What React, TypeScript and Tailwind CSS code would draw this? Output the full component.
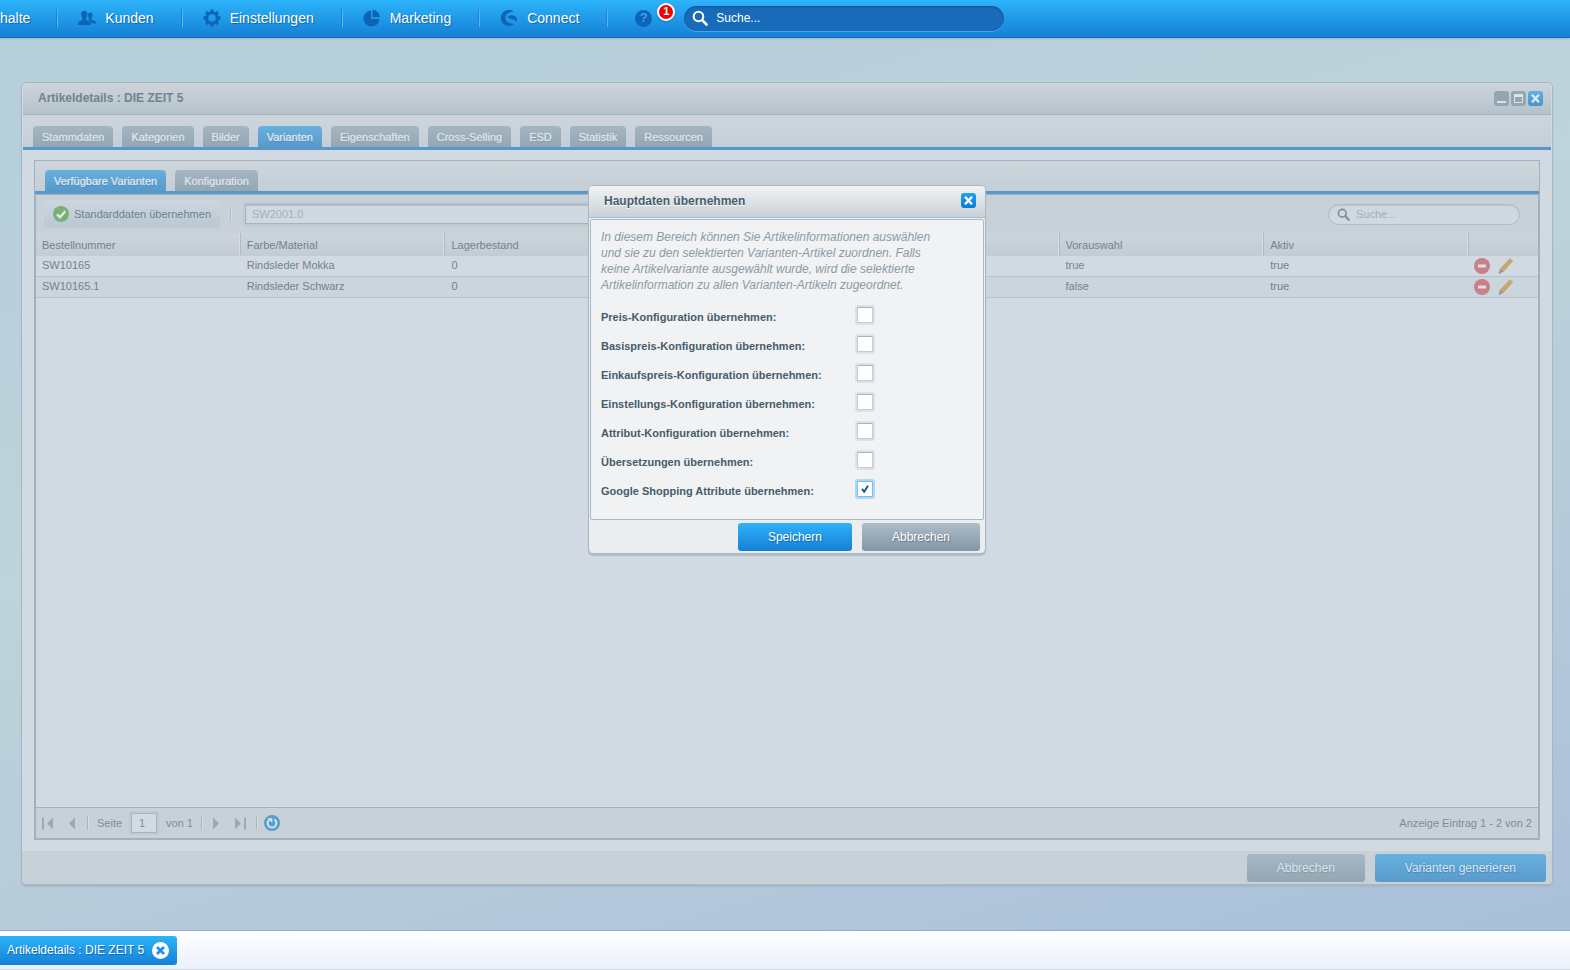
import type { ReactNode } from "react";

const CONFIG_OPTIONS = [
  { id: "price", label: "Preis-Konfiguration übernehmen:", checked: false },
  { id: "basePrice", label: "Basispreis-Konfiguration übernehmen:", checked: false },
  { id: "purchasePrice", label: "Einkaufspreis-Konfiguration übernehmen:", checked: false },
  { id: "settings", label: "Einstellungs-Konfiguration übernehmen:", checked: false },
  { id: "attribute", label: "Attribut-Konfiguration übernehmen:", checked: false },
  { id: "translations", label: "Übersetzungen übernehmen:", checked: false },
  { id: "google", label: "Google Shopping Attribute übernehmen:", checked: true },
];

const VARIANTS = [
  { number: "SW10165", color: "Rindsleder Mokka", stock: "0", preselected: "true", active: "true" },
  { number: "SW10165.1", color: "Rindsleder Schwarz", stock: "0", preselected: "false", active: "true" },
];

const ARTICLE_TABS = [
  "Stammdaten",
  "Kategorien",
  "Bilder",
  "Varianten",
  "Eigenschaften",
  "Cross-Selling",
  "ESD",
  "Statistik",
  "Ressourcen",
];

function UsersIcon() {
  return (
    <svg width="18" height="16" viewBox="0 0 18 16" fill="#0d65b5" aria-hidden="true">
      <path d="M12.300 2.500c1.400 0 2.300 1 2.300 2.600 0 1.200-.4 2-1 2.600v1.600c.3.900 4.400 1.200 4.400 3.200v1h-4.300c-.4-1.600-1.900-2.300-3.100-2.800.3-1 .3-2.600.2-3-.5-.6-.8-1.300-.8-2.700 0-1.500.9-2.500 2.300-2.500z" />
      <path d="M6.300.8c2 0 3.200 1.400 3.200 3.500 0 1.500-.5 2.700-1.200 3.500v1.800c.4 1.200 4.600 1.700 4.600 4.300v1H0v-1c0-2.600 4-3.100 4.400-4.300V7.800C3.600 7 3.100 5.800 3.100 4.300 3.100 2.200 4.300.8 6.300.8z" />
    </svg>
  );
}

function GearIcon() {
  const teeth = [0, 45, 90, 135, 180, 225, 270, 315];
  return (
    <svg width="18" height="18" viewBox="0 0 18 18" aria-hidden="true">
      <circle cx="9" cy="9" r="5.200" fill="none" stroke="#0d65b5" strokeWidth="2.800" />
      {teeth.map((a) => (
        <path key={a} d="M7 3.200 7.600.5h2.800L11 3.200z" fill="#0d65b5" transform={`rotate(${a} 9 9)`} />
      ))}
    </svg>
  );
}

function PieIcon() {
  return (
    <svg width="18" height="18" viewBox="0 0 18 18" fill="#0d65b5" aria-hidden="true">
      <path d="M8 1.500V10h8.500A8 8 0 1 1 8 1.500z" />
      <path d="M9.500.8a7.500 7.500 0 0 1 7.300 7.500H9.500z" />
    </svg>
  );
}

function ConnectIcon() {
  return (
    <svg width="18" height="18" viewBox="0 0 18 18" fill="#0d65b5" aria-hidden="true">
      <path d="M14.500 2.500C12.500.9 9.500.5 6.800 1.300 3.200 2.400.8 5.400.8 9c0 4.500 3.500 7.900 8 7.900 2 0 3.900-.7 5.300-2-3.900.4-8.500-1.600-8.700-5.700C5.200 5 9.300 2.300 14.500 2.500z" />
      <path d="M8.700 6.900c2.500-1.500 8 .3 8.300 3.300 0 .9-.3 1.900-.7 2.600-1-2.500-6.800-2.300-8.100-4.200-.4-.6-.1-1.300.5-1.700z" />
    </svg>
  );
}

function SearchIcon({ size, color }: { size: number; color: string }) {
  return (
    <svg width={size} height={size} viewBox="0 0 16 16" fill="none" stroke={color} className="shrink-0" aria-hidden="true">
      <circle cx="6.500" cy="6.500" r="4.800" strokeWidth="2" />
      <path d="M10.200 10.200 14.500 14.500" strokeWidth="2.600" strokeLinecap="round" />
    </svg>
  );
}

function NavItem({ icon, label }: { icon: ReactNode; label: string }) {
  return (
    <a href="#" className="flex h-[18px] items-center gap-[9px] border-l border-[#5cb8f5] pr-[28px] pl-[20px] whitespace-nowrap shadow-[-1px_0_0_#1b80cf]">
      {icon}
      {label}
    </a>
  );
}

function Tab({ label, active }: { label: string; active: boolean }) {
  return (
    <button
      type="button"
      role="tab"
      aria-selected={active}
      className={
        "h-[21px] rounded-t-[4px] px-[9px] text-[11px] leading-[22px] text-[#dce4ea] whitespace-nowrap " +
        (active
          ? "bg-linear-to-b from-[#65b1de] to-[#5899ca] [text-shadow:0_0_1px_#dce4ea,0_1px_1px_#3f7fc0]"
          : "bg-linear-to-b from-[#a5b6c1] to-[#93a6b3] [text-shadow:0_0_1px_#d5dde3,0_1px_1px_#8599a6]")
      }
    >
      {label}
    </button>
  );
}

function TabBar({ labels, active, nested }: { labels: string[]; active: string; nested?: boolean }) {
  return (
    <div
      role="tablist"
      className={
        "flex items-end gap-[9px] border-b-[3px] border-[#5698ca] bg-linear-to-b from-[#ced6dc] to-[#c5cdd7] px-[10px] " +
        (nested ? "pt-[9px]" : "pt-[11px]")
      }
    >
      {labels.map((label) => (
        <Tab key={label} label={label} active={label === active} />
      ))}
    </div>
  );
}

function CloseGlyph() {
  return (
    <svg width="9" height="9" viewBox="0 0 9 9" stroke="currentColor" strokeWidth="2.400" aria-hidden="true">
      <path d="M1 .8 8 8.200M8 .8 1 8.200" />
    </svg>
  );
}

function DeleteIcon() {
  return (
    <svg width="16" height="16" viewBox="0 0 16 16" aria-hidden="true">
      <circle cx="8" cy="8" r="8" fill="#ca8089" />
      <rect x="4" y="6.500" width="8" height="3" rx=".6" fill="#dde0e6" />
    </svg>
  );
}

function PencilIcon() {
  return (
    <svg width="16" height="16" viewBox="0 0 16 16" aria-hidden="true">
      <path d="M11.800.3 15.200 3 6 13.300 1.900 10.800z" fill="#c9a670" />
      <path d="M1.900 10.800 6 13.300 1.200 16 .8 15.600z" fill="#a3938f" />
    </svg>
  );
}

function PagerArrow({ label, flip, bar }: { label: string; flip?: boolean; bar?: boolean }) {
  return (
    <button type="button" aria-label={label} className="flex h-4 w-3 items-center justify-center">
      <svg width="12" height="13" viewBox="0 0 12 13" fill="#9aabb7" className={flip ? "rotate-180" : ""} aria-hidden="true">
        {bar && <rect x="0" y=".5" width="2" height="12" />}
        <path d="M11 .5v12L5 6.500z" />
      </svg>
    </button>
  );
}

function PagerDivider() {
  return <div className="h-[14px] w-[2px] border-l border-[#a9b7c1] bg-[#d6dee4]" />;
}

function MainNav() {
  return (
    <header className="flex h-[38px] items-center border-b border-[#0f69b9] bg-linear-to-b from-[#2db4fa] to-[#1580d5] pb-px text-[14px] text-white shadow-[0_1px_2px_#9fb6c2] [text-shadow:1px_1px_1px_#1463aa]">
      <a href="#" className="pr-[27px]">halte</a>
      <NavItem icon={<UsersIcon />} label="Kunden" />
      <NavItem icon={<GearIcon />} label="Einstellungen" />
      <NavItem icon={<PieIcon />} label="Marketing" />
      <NavItem icon={<ConnectIcon />} label="Connect" />
      <div className="flex h-[18px] items-center border-l border-[#5cb8f5] pl-[27px] shadow-[-1px_0_0_#1b80cf]">
        <button type="button" aria-label="Hilfe" className="relative flex size-[17px] items-center justify-center rounded-full bg-[#0d65b5] text-[13px] font-bold text-[#3ba3ec] [text-shadow:none]">
          ?
          <span className="absolute -top-[7px] left-[22px] flex size-[18px] items-center justify-center rounded-full border-2 border-white bg-[#f80000] text-[11px] text-white shadow">
            1
          </span>
        </button>
      </div>
      <label className="ml-[32px] flex h-[25px] w-[320px] items-center gap-[8px] rounded-full bg-[#186bb8] pl-[8px] shadow-[inset_0_1px_2px_#0e559b,0_1px_0_#43a6ee]">
        <SearchIcon size={16} color="#ffffff" />
        <input
          aria-label="Suche"
          placeholder="Suche..."
          className="min-w-0 flex-1 bg-transparent text-[12px] text-white outline-none [text-shadow:none] placeholder:text-white"
        />
      </label>
    </header>
  );
}

function WindowControls() {
  return (
    <div className="flex gap-[2px]">
      <button type="button" aria-label="Minimieren" className="flex size-[15px] items-end justify-center rounded-[3px] bg-[#93a6b3] pb-[3px]">
        <span className="h-[2px] w-[9px] bg-[#dbe2e8]" />
      </button>
      <button type="button" aria-label="Maximieren" className="flex size-[15px] items-center justify-center rounded-[3px] bg-[#93a6b3]">
        <span className="h-[9px] w-[9px] border border-t-[3px] border-[#dbe2e8]" />
      </button>
      <button type="button" aria-label="Schließen" className="flex size-[15px] items-center justify-center rounded-[3px] bg-linear-to-b from-[#5fb0e0] to-[#4b95cd] text-[#dfe7ee]">
        <CloseGlyph />
      </button>
    </div>
  );
}

function VariantTable() {
  const head = "h-[23px] border-r border-[#adbcc6] px-[6px] text-left font-normal shadow-[inset_-1px_0_0_#d6dee3]";
  const cell = "h-[21px] border-b border-[#b4c2cc] px-[6px] pb-[2px]";
  return (
    <table className="w-full table-fixed border-separate border-spacing-0 text-[11px] leading-[16px] text-[#71838f]">
      <thead className="bg-linear-to-b from-[#ccd5db] to-[#c3cbd5]">
        <tr>
          <th className={head}>Bestellnummer</th>
          <th className={head}>Farbe/Material</th>
          <th className={head}>Lagerbestand</th>
          <th className={head} />
          <th className={head} />
          <th className={head}>Vorauswahl</th>
          <th className={head}>Aktiv</th>
          <th className="w-[69px]" />
        </tr>
      </thead>
      <tbody>
        {VARIANTS.map((v) => (
          <tr key={v.number} className="even:bg-[#cbd5dc]">
            <td className={cell}>{v.number}</td>
            <td className={cell}>{v.color}</td>
            <td className={cell}>{v.stock}</td>
            <td className={cell} />
            <td className={cell} />
            <td className={cell}>{v.preselected}</td>
            <td className={cell}>{v.active}</td>
            <td className="border-b border-[#b4c2cc] pl-[5px]">
              <div className="flex gap-[8px]">
                <button type="button" aria-label="Löschen"><DeleteIcon /></button>
                <button type="button" aria-label="Bearbeiten"><PencilIcon /></button>
              </div>
            </td>
          </tr>
        ))}
      </tbody>
    </table>
  );
}

function VariantToolbar() {
  return (
    <div className="flex h-[38px] items-center bg-[#c8d1d8] pr-[18px] pl-[8px]">
      <button type="button" className="flex h-[28px] items-center gap-[5px] rounded-[4px] bg-linear-to-b from-[#cdd6de] to-[#b9c8d4] px-[9px] text-[11px] whitespace-nowrap text-[#6f818c]">
        <svg width="16" height="16" viewBox="0 0 16 16" aria-hidden="true">
          <circle cx="8" cy="8" r="8" fill="#79b075" />
          <path d="M4 8.300 7 11.200 12.300 5.200" fill="none" stroke="#e3e9ea" strokeWidth="2.400" />
        </svg>
        Standarddaten übernehmen
      </button>
      <div className="ml-[10px] h-[14px] w-[2px] border-l border-[#a3bfdc] bg-[#d3dde6]" />
      <input
        aria-label="Artikelnummer"
        placeholder="SW2001.0"
        className="ml-[13px] h-[20px] w-[480px] border border-[#a5b4be] bg-[#d0d9df] px-[6px] text-[11px] text-[#71838f] shadow-[0_0_0_2px_#bfcad2,inset_0_1px_1px_#b5c2cb] outline-none placeholder:text-[#a0b0ba]"
      />
      <label className="ml-auto flex h-[21px] w-[192px] items-center gap-[6px] rounded-full border border-[#adbcc6] bg-[#d0d9e0] pl-[8px] shadow-[inset_0_1px_1px_#b8c5ce]">
        <SearchIcon size={13} color="#7b8e9a" />
        <input
          aria-label="Varianten durchsuchen"
          placeholder="Suche..."
          className="min-w-0 flex-1 bg-transparent text-[11px] text-[#71838f] outline-none placeholder:text-[#9cadb8]"
        />
      </label>
    </div>
  );
}

function Pager() {
  return (
    <div className="flex h-[31px] items-center border-t border-[#9fb1be] bg-[#c8d1d8] px-[6px] text-[11px] whitespace-nowrap text-[#7b8d98]">
      <PagerArrow label="Erste Seite" bar />
      <div className="ml-[10px]"><PagerArrow label="Vorherige Seite" /></div>
      <div className="mr-[8px] ml-[11px]"><PagerDivider /></div>
      <label htmlFor="page">Seite</label>
      <input id="page" defaultValue="1" className="mr-[9px] ml-[9px] h-[20px] w-[26px] border border-[#a5b4be] bg-[#d2dbe2] px-[7px] text-[11px] shadow-[0_0_0_2px_#bfcad2] outline-none" />
      <span>von 1</span>
      <div className="mr-[9px] ml-[8px]"><PagerDivider /></div>
      <PagerArrow label="Nächste Seite" flip />
      <div className="ml-[10px]"><PagerArrow label="Letzte Seite" flip bar /></div>
      <div className="mr-[6px] ml-[10px]"><PagerDivider /></div>
      <button type="button" aria-label="Aktualisieren">
        <svg width="16" height="16" viewBox="0 0 16 16" aria-hidden="true">
          <circle cx="8" cy="8" r="8" fill="#559fca" />
          <path d="M10.300 4.300A4.400 4.400 0 1 1 5.200 4.700" fill="none" stroke="#d5e3ec" strokeWidth="2" />
          <path d="M3.500 3.300h4.800V8z" fill="#d5e3ec" />
        </svg>
      </button>
      <span className="ml-auto">Anzeige Eintrag 1 - 2 von 2</span>
    </div>
  );
}

function ApplyDataDialog() {
  return (
    <form
      role="dialog"
      aria-labelledby="dialog-title"
      className="absolute top-[102px] left-1/2 w-[398px] -translate-x-1/2 rounded-[5px] border border-[#a8b8c3] bg-[#ebedef] shadow-[0_2px_1px_#b0bec9]"
    >
      <div className="flex h-[32px] items-center justify-between rounded-t-[4px] border-b border-[#a9bac7] bg-linear-to-b from-[#f3f3f3] to-[#c8d2d8] pr-[9px] pb-[2px] pl-[15px]">
        <h2 id="dialog-title" className="text-[12px] font-bold text-[#475c6a] [text-shadow:0_1px_0_#ffffff]">Hauptdaten übernehmen</h2>
        <button type="button" aria-label="Schließen" className="flex size-[15px] items-center justify-center rounded-[3px] bg-linear-to-b from-[#1ba3f5] to-[#0a7bd3] text-white">
          <CloseGlyph />
        </button>
      </div>
      <div className="mx-px mt-px rounded-[2px] border border-[#a9b9c5] bg-[#f0f2f4] px-[10px] pt-[9px] pb-[11px]">
        <p className="mb-[12px] max-w-[350px] text-[12px] leading-[16px] text-[#8a9ba5] italic">
          In diesem Bereich können Sie Artikelinformationen auswählen und sie zu den selektierten Varianten-Artikel zuordnen. Falls keine Artikelvariante ausgewählt wurde, wird die selektierte Artikelinformation zu allen Varianten-Artikeln zugeordnet.
        </p>
        {CONFIG_OPTIONS.map((o) => (
          <div key={o.id} className="flex h-[29px] items-start">
            <label htmlFor={o.id} className="w-[254px] text-[11px] leading-[24px] font-bold whitespace-nowrap text-[#475c6a]">
              {o.label}
            </label>
            <div className="grid size-[20px] place-items-center">
              <input
                id={o.id}
                type="checkbox"
                defaultChecked={o.checked}
                className="peer col-start-1 row-start-1 size-[16px] appearance-none rounded-[1px] border border-[#c3cad0] border-t-[#a9b3ba] bg-white shadow-[0_0_0_2px_#dfe2e5] checked:border-[#7cbdf0] checked:shadow-[0_0_0_2px_#aadaf9]"
              />
              <svg width="8" height="8" viewBox="0 0 8 8" className="pointer-events-none invisible col-start-1 row-start-1 peer-checked:visible" aria-hidden="true">
                <path d="M1 3.800 3.200 6.700 7 .8" fill="none" stroke="#0f5c9f" strokeWidth="2" />
              </svg>
            </div>
          </div>
        ))}
      </div>
      <div className="flex justify-end gap-[10px] px-[5px] pt-[3px] pb-[2px] text-[12px] text-white">
        <button type="submit" className="h-[28px] rounded-[3px] bg-linear-to-b from-[#2fb1f8] to-[#1580d7] px-[30px] [text-shadow:1px_1px_1px_#1463aa]">
          Speichern
        </button>
        <button type="button" className="h-[28px] rounded-[3px] bg-linear-to-b from-[#aebcc7] to-[#8297a5] px-[30px] [text-shadow:1px_1px_1px_#5f7481]">
          Abbrechen
        </button>
      </div>
    </form>
  );
}

function ArticleWindow() {
  return (
    <section className="relative flex flex-1 flex-col rounded-[5px] border border-[#a5b7c3] bg-[#d1dae2] shadow-[0_2px_1px_#a6b8c8]">
      <div className="mx-px flex h-[32px] items-center justify-between rounded-t-[4px] border-b border-[#a2b4c1] bg-linear-to-b from-[#ced5db] to-[#b4c2cb] pr-[8px] pb-px pl-[15px]">
        <h1 className="text-[12px] font-bold text-[#71838f]">Artikeldetails : DIE ZEIT 5</h1>
        <WindowControls />
      </div>
      <div className="mx-px flex flex-1 flex-col">
        <TabBar labels={ARTICLE_TABS} active="Varianten" />
        <div className="mx-[11px] mt-[10px] mb-[11px] flex flex-1 flex-col border border-[#a0b2be]">
          <TabBar labels={["Verfügbare Varianten", "Konfiguration"]} active="Verfügbare Varianten" nested />
          <div className="flex flex-1 flex-col border border-[#a0b2be]">
            <VariantToolbar />
            <VariantTable />
            <div className="flex-1" />
            <Pager />
          </div>
        </div>
      </div>
      <div className="flex justify-end gap-[10px] rounded-b-[4px] bg-[#c8d1d7] px-[6px] pt-[3px] pb-[2px] text-[12px] text-[#dce5ec]">
        <button type="button" className="h-[28px] rounded-[3px] bg-linear-to-b from-[#a8b8c3] to-[#93a6b4] px-[30px] [text-shadow:0_1px_1px_#8093a1]">
          Abbrechen
        </button>
        <button type="button" className="h-[28px] rounded-[3px] bg-linear-to-b from-[#65b1de] to-[#5a9acb] px-[30px] [text-shadow:0_1px_1px_#3f7fc0]">
          Varianten generieren
        </button>
      </div>
      <ApplyDataDialog />
    </section>
  );
}

function Taskbar() {
  return (
    <footer className="flex h-[40px] items-center border-t border-b border-t-[#8facd0] border-b-[#d5dade] bg-linear-to-b from-white to-[#e9f1fb]">
      <button type="button" className="flex h-[29px] items-center gap-[8px] rounded-r-[3px] bg-linear-to-b from-[#2db4fa] to-[#1580d5] pr-[8px] pl-[7px] text-[12px] text-white [text-shadow:1px_1px_1px_#1463aa]">
        Artikeldetails : DIE ZEIT 5
        <svg width="17" height="17" viewBox="0 0 17 17" aria-hidden="true">
          <circle cx="8.500" cy="8.500" r="8.500" fill="#ffffff" />
          <path d="M5 5l7 7M12 5l-7 7" stroke="#1e8fe2" strokeWidth="2.800" />
        </svg>
      </button>
    </footer>
  );
}

export default function App() {
  return (
    <div className="flex min-h-screen flex-col bg-[linear-gradient(164deg,#b5cfdc_0%,#b9d0db_22%,#bfd3da_42%,#b7cbda_66%,#a8bfda_100%)] font-['Liberation_Sans',Arial,sans-serif]">
      <MainNav />
      <main className="flex flex-1 pt-[44px] pr-[17px] pb-[45px] pl-[21px]">
        <ArticleWindow />
      </main>
      <Taskbar />
    </div>
  );
}
